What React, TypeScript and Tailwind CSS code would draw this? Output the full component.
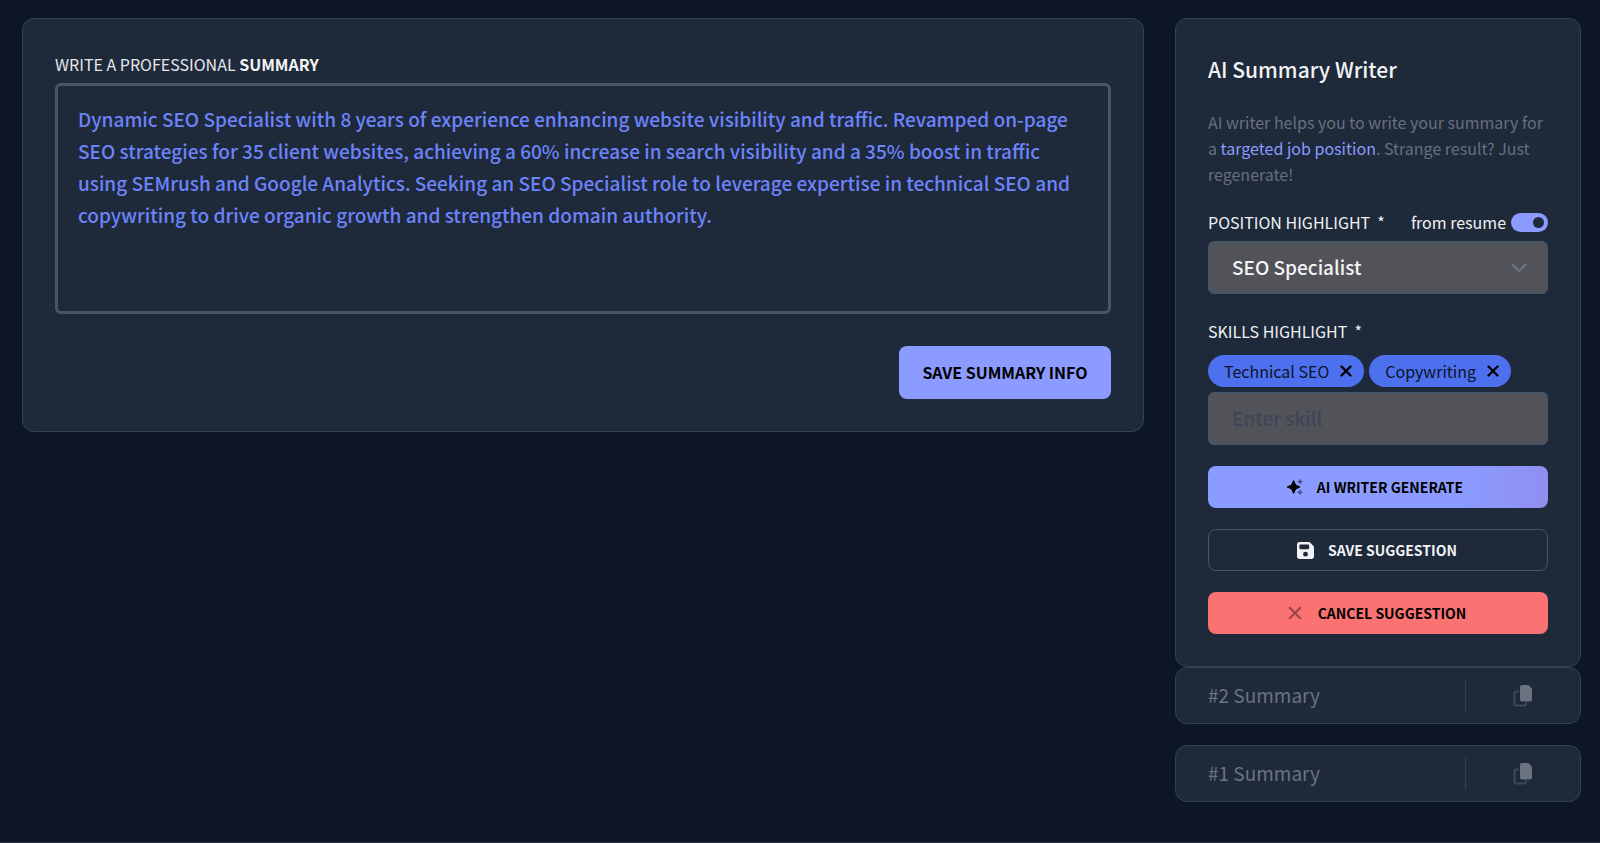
import React, { useState } from 'react';

function Sparkles() {
  return (
    <svg viewBox="0 0 16 16" className="size-4" fill="currentColor" aria-hidden="true">
      <path d="M6.6 1.6 8.6 6 13 8 8.6 10 6.6 14.4 4.6 10 0.2 8 4.6 6Z" stroke="currentColor" strokeWidth="1" strokeLinejoin="round" />
      <g opacity="0.5">
        <path d="M13.1 0.2 13.8 2 15.6 2.7 13.8 3.4 13.1 5.2 12.4 3.4 10.6 2.7 12.4 2Z" stroke="currentColor" strokeWidth="0.6" />
        <path d="M13.1 10.8 13.8 12.6 15.6 13.3 13.8 14 13.1 15.8 12.4 14 10.6 13.3 12.4 12.6Z" stroke="currentColor" strokeWidth="0.6" />
      </g>
    </svg>
  );
}

function Floppy() {
  return (
    <svg viewBox="0 0 448 448" className="size-[17px]" fill="currentColor" aria-hidden="true">
      <path
        fillRule="evenodd"
        d="M64 0C29 0 0 29 0 64v320c0 35 29 64 64 64h320c35 0 64-29 64-64V141c0-17-7-33-19-45l-77-77C340 7 324 0 307 0H64Zm0 96c0-18 14-32 32-32h192c18 0 32 14 32 32v64c0 18-14 32-32 32H96c-18 0-32-14-32-32V96Zm160 160a64 64 0 1 1 0 128 64 64 0 1 1 0-128Z"
      />
    </svg>
  );
}

function Cross({ className, width }: { className: string; width: number }) {
  return (
    <svg viewBox="0 0 12 12" className={className} fill="none" stroke="currentColor" strokeWidth={width} strokeLinecap="round" aria-hidden="true">
      <path d="M1.5 1.5 10.5 10.5M10.5 1.5 1.5 10.5" />
    </svg>
  );
}

function Copy() {
  return (
    <svg viewBox="0 0 20 22" className="h-[22px] w-5" fill="none" aria-hidden="true">
      <path d="M5.5 6.5H3A1.5 1.5 0 0 0 1.5 8v11A1.5 1.5 0 0 0 3 20.5h8.5A1.5 1.5 0 0 0 13 19v-1.5" stroke="#3d485b" strokeWidth="2" />
      <path d="M9 0h6.5L19 3.8V14.5a2 2 0 0 1-2 2H9a2 2 0 0 1-2-2V2a2 2 0 0 1 2-2Z" fill="#6b7280" />
    </svg>
  );
}

function Chip({ label, onRemove }: { label: string; onRemove: () => void }) {
  return (
    <span className="flex h-8 items-center gap-[11px] rounded-full bg-[#4d70ee] pr-3 pl-4 text-base text-[#0c1427]">
      {label}
      <button type="button" aria-label={'Remove ' + label} onClick={onRemove} className="text-black">
        <Cross className="size-3" width={2.3} />
      </button>
    </span>
  );
}

function SummaryRow({ title }: { title: string }) {
  return (
    <div className="flex h-[57px] items-center rounded-xl border border-[#334155] bg-[#1e293a] pl-8">
      <span className="flex-1 text-[19px] text-[#6b7280]">{title}</span>
      <div className="flex h-[33px] w-[115px] items-center justify-center border-l border-[#334155]">
        <button type="button" aria-label={'Copy ' + title}>
          <Copy />
        </button>
      </div>
    </div>
  );
}

export default function App() {
  const [summary, setSummary] = useState(
    'Dynamic SEO Specialist with 8 years of experience enhancing website visibility and traffic. Revamped on-page SEO strategies for 35 client websites, achieving a 60% increase in search visibility and a 35% boost in traffic using SEMrush and Google Analytics. Seeking an SEO Specialist role to leverage expertise in technical SEO and copywriting to drive organic growth and strengthen domain authority.'
  );
  const [skills, setSkills] = useState(['Technical SEO', 'Copywriting']);
  const [fromResume, setFromResume] = useState(true);

  return (
    <div className="min-h-screen border-b border-[#2a3444] bg-[#0d1528] pt-[18px] pr-[19px] pb-10 pl-[22px] font-['Noto_Sans_CJK_SC','Noto_Sans',sans-serif] text-[#f1f2f4]">
      <div className="grid grid-cols-[minmax(0,1fr)_406px] items-start gap-[31px]">
        <main className="flex flex-col rounded-xl border border-[#334155] bg-[#1e293a] p-8">
          <label htmlFor="summary" className="mb-1.5 text-base leading-[26px] text-[#e5e7eb]">
            WRITE A PROFESSIONAL <b className="font-bold text-[#f4f4f5]">SUMMARY</b>
          </label>
          <textarea
            id="summary"
            value={summary}
            spellCheck={false}
            onChange={(e) => setSummary(e.target.value)}
            className="h-[231px] w-full resize-none rounded-md border-[3px] border-[#475569] bg-transparent px-5 py-[17px] text-[19px] leading-8 font-medium text-[#6c84fb] outline-none"
          />
          <button type="button" className="mt-8 h-[53px] w-[212px] self-end rounded-lg bg-[#8b9bff] pb-0.5 text-base font-bold text-black">
            SAVE SUMMARY INFO
          </button>
        </main>

        <aside>
          <section className="flex flex-col rounded-xl border border-[#334155] bg-[#1e293a] p-8">
            <h2 className="text-[21px] leading-9 font-medium">AI Summary Writer</h2>
            <p className="mt-[22px] text-base leading-[26px] text-[#667080]">
              AI writer helps you to write your summary for a{' '}
              <a href="#position" className="text-[#8b9bff]">targeted job position</a>. Strange result? Just regenerate!
            </p>

            <div className="mt-[22px] flex h-[26px] items-center justify-between text-base">
              <label htmlFor="position">POSITION HIGHLIGHT&nbsp; *</label>
              <label className="flex items-center gap-[5px]">
                from resume
                <input
                  type="checkbox"
                  role="switch"
                  checked={fromResume}
                  onChange={(e) => setFromResume(e.target.checked)}
                  className="h-[19px] w-[37px] appearance-none rounded-full bg-slate-600 p-1 before:block before:size-[11px] before:rounded-full before:bg-[#1e293a] checked:bg-[#8b9bff] checked:before:ml-auto"
                />
              </label>
            </div>
            <div className="mt-1.5 grid items-center">
              <select
                id="position"
                className="col-start-1 row-start-1 h-[53px] w-full appearance-none rounded-md border-2 border-[#475569] bg-[#525259] px-[22px] text-[19px] font-medium text-[#f4f4f5]"
              >
                <option>SEO Specialist</option>
              </select>
              <svg viewBox="0 0 16 10" className="pointer-events-none col-start-1 row-start-1 mr-[21px] h-2.5 w-4 justify-self-end" fill="none" stroke="#6b7280" strokeWidth="2.4" strokeLinecap="round" strokeLinejoin="round" aria-hidden="true">
                <path d="M1.5 1.5 8 8 14.5 1.5" />
              </svg>
            </div>

            <label htmlFor="skill" className="mt-6 text-base leading-[26px]">SKILLS HIGHLIGHT&nbsp; *</label>
            <div className="mt-[11px] mb-[5px] flex flex-wrap gap-[5px]">
              {skills.map((s) => (
                <Chip key={s} label={s} onRemove={() => setSkills(skills.filter((x) => x !== s))} />
              ))}
            </div>
            <input
              id="skill"
              type="text"
              placeholder="Enter skill"
              className="h-[53px] w-full rounded-md border-2 border-[#475569] bg-[#525259] px-[22px] pb-0.5 text-[19px] font-medium text-[#f4f4f5] placeholder:text-[#3c4657]"
            />

            <div className="mt-[21px] flex flex-col gap-[21px] text-sm font-bold">
              <button type="button" className="flex h-[42px] items-center justify-center gap-3.5 rounded-lg bg-linear-to-r from-[#8b9bff] from-75% to-[#8f8ff0] pr-1.5 text-black">
                <Sparkles />
                AI WRITER GENERATE
              </button>
              <button type="button" className="flex h-[42px] items-center justify-center gap-3.5 rounded-lg border border-[#475569] pr-0.5">
                <Floppy />
                SAVE SUGGESTION
              </button>
              <button type="button" className="flex h-[42px] items-center justify-center gap-4 rounded-lg bg-[#fa7272] pr-0.5 text-black">
                <span className="text-[#9c4549]">
                  <Cross className="size-3.5" width={1.8} />
                </span>
                CANCEL SUGGESTION
              </button>
            </div>
          </section>
          <div className="flex flex-col gap-[21px]">
            <SummaryRow title="#2 Summary" />
            <SummaryRow title="#1 Summary" />
          </div>
        </aside>
      </div>
    </div>
  );
}
